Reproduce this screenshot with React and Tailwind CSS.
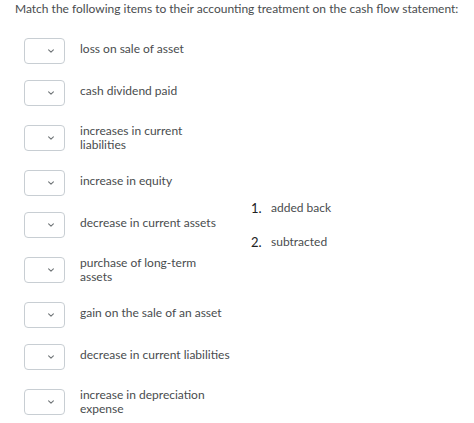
import React from "react";

const items = [
  ["loss on sale of asset"],
  ["cash dividend paid"],
  ["increases in current", "liabilities"],
  ["increase in equity"],
  ["decrease in current assets"],
  ["purchase of long-term", "assets"],
  ["gain on the sale of an asset"],
  ["decrease in current liabilities"],
  ["increase in depreciation", "expense"],
];

function SelectBox() {
  return (
    <div className="w-[41px] h-[26px] shrink-0 rounded-[4px] border border-[#c8ced3] bg-white flex items-center justify-end pr-[10px]">
      <svg width="6" height="4" viewBox="0 0 6 4" fill="none">
        <path d="M0.6 0.8 L3 3.1 L5.4 0.8" stroke="#6e7376" strokeWidth="1.1" strokeLinecap="round" strokeLinejoin="round" />
      </svg>
    </div>
  );
}

export default function App() {
  return (
    <div className="w-[474px] h-[423px] bg-white overflow-hidden text-[#494c4e]" style={{ fontFamily: "Lato, 'Open Sans', sans-serif" }}>
      <div className="pl-[15px] pt-[1px] text-[12px] leading-[16px] whitespace-nowrap">
        Match the following items to their accounting treatment on the cash flow statement:
      </div>
      <div className="mt-[21px] flex items-center">
        <div className="w-[235px] pl-[24px] flex flex-col gap-[16px]">
          {items.map((lines, i) => (
            <div key={i} className="flex items-center gap-[15px]">
              <SelectBox />
              <div className={lines.length > 1 ? "py-[2px] text-[12px] leading-[14px]" : "pb-[5px] text-[12px] leading-[14px]"}>
                {lines.map((l, j) => (
                  <div key={j}>{l}</div>
                ))}
              </div>
            </div>
          ))}
        </div>
        <div className="pl-[16px] mb-[6px] flex flex-col gap-[18px] text-[12px] leading-[16px]">
          <div className="flex">
            <span className="w-[20px] text-[#202122] text-[13px]">1.</span>
            <span>added back</span>
          </div>
          <div className="flex">
            <span className="w-[20px] text-[#202122] text-[13px]">2.</span>
            <span>subtracted</span>
          </div>
        </div>
      </div>
    </div>
  );
}
